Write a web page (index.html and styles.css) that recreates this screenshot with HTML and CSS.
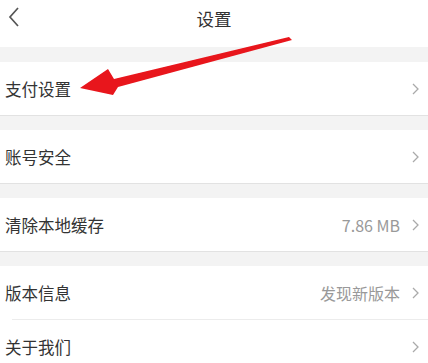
FILE: index.html
```html
<!DOCTYPE html>
<html lang="zh">
<head>
<meta charset="utf-8">
<title>设置</title>
<link rel="stylesheet" href="styles.css">
</head>
<body>
<div class="page">
  <header class="header">
    <svg class="back" width="12" height="20" viewBox="0 0 12 20"><path d="M10 1 L2 10 L10 19" fill="none" stroke="#555" stroke-width="1.7"/></svg>
    <div class="title">设置</div>
  </header>
  <div class="gap"></div>
  <div class="row line"><span class="label">支付设置</span><span class="right"><svg class="chev" width="7" height="12" viewBox="0 0 7 12"><path d="M1 1 L6 6 L1 11" fill="none" stroke="#aaa" stroke-width="1.3"/></svg></span></div>
  <div class="gap"></div>
  <div class="row line"><span class="label">账号安全</span><span class="right"><svg class="chev" width="7" height="12" viewBox="0 0 7 12"><path d="M1 1 L6 6 L1 11" fill="none" stroke="#aaa" stroke-width="1.3"/></svg></span></div>
  <div class="gap"></div>
  <div class="row line"><span class="label">清除本地缓存</span><span class="right"><span class="value">7.86 MB</span><svg class="chev" width="7" height="12" viewBox="0 0 7 12"><path d="M1 1 L6 6 L1 11" fill="none" stroke="#aaa" stroke-width="1.3"/></svg></span></div>
  <div class="gap"></div>
  <div class="row inset"><span class="label">版本信息</span><span class="right"><span class="value">发现新版本</span><svg class="chev" width="7" height="12" viewBox="0 0 7 12"><path d="M1 1 L6 6 L1 11" fill="none" stroke="#aaa" stroke-width="1.3"/></svg></span></div>
  <div class="row"><span class="label">关于我们</span><span class="right"><svg class="chev" width="7" height="12" viewBox="0 0 7 12"><path d="M1 1 L6 6 L1 11" fill="none" stroke="#aaa" stroke-width="1.3"/></svg></span></div>
  <svg class="arrow" width="428" height="120" viewBox="0 0 428 120">
    <defs><filter id="soft" x="-10%" y="-10%" width="120%" height="120%"><feGaussianBlur stdDeviation="0.6"/></filter></defs>
    <path d="M80 88 L108 69 L114 79 L289 37 L292 40 L118 87 L113 95 Z" fill="#e8141b" filter="url(#soft)"/>
  </svg>
</div>
</body>
</html>
```
FILE: styles.css
```css
* { box-sizing: border-box; }
html, body { margin: 0; padding: 0; background: #fff; }
body { font-family: "Noto Sans CJK SC", "Noto Sans", sans-serif; color: #333; }
.page { position: relative; width: 428px; height: 363px; overflow: hidden; }
.header { height: 47px; position: relative; display: flex; justify-content: center; padding-top: 6px; }
.back { position: absolute; left: 8px; top: 7px; }
.title { font-size: 17.5px; line-height: 26px; color: #333; }
.gap { height: 14px; background: #f3f3f3; }
.gap:first-of-type { height: 15px; }
.row { height: 54px; display: flex; align-items: center; justify-content: space-between; padding: 0 9px 0 5px; background: #fff; position: relative; }
.row.line { border-bottom: 1px solid #e2e2e2; }
.row.inset::after { content: ""; position: absolute; left: 12px; right: 0; bottom: 0; height: 1px; background: #ececec; }
.label { font-size: 16.5px; color: #333; }
.right { display: flex; align-items: center; gap: 12px; }
.value { font-size: 16px; color: #999; }
.chev { display: block; }
.arrow { position: absolute; left: 0; top: 0; pointer-events: none; }
```
